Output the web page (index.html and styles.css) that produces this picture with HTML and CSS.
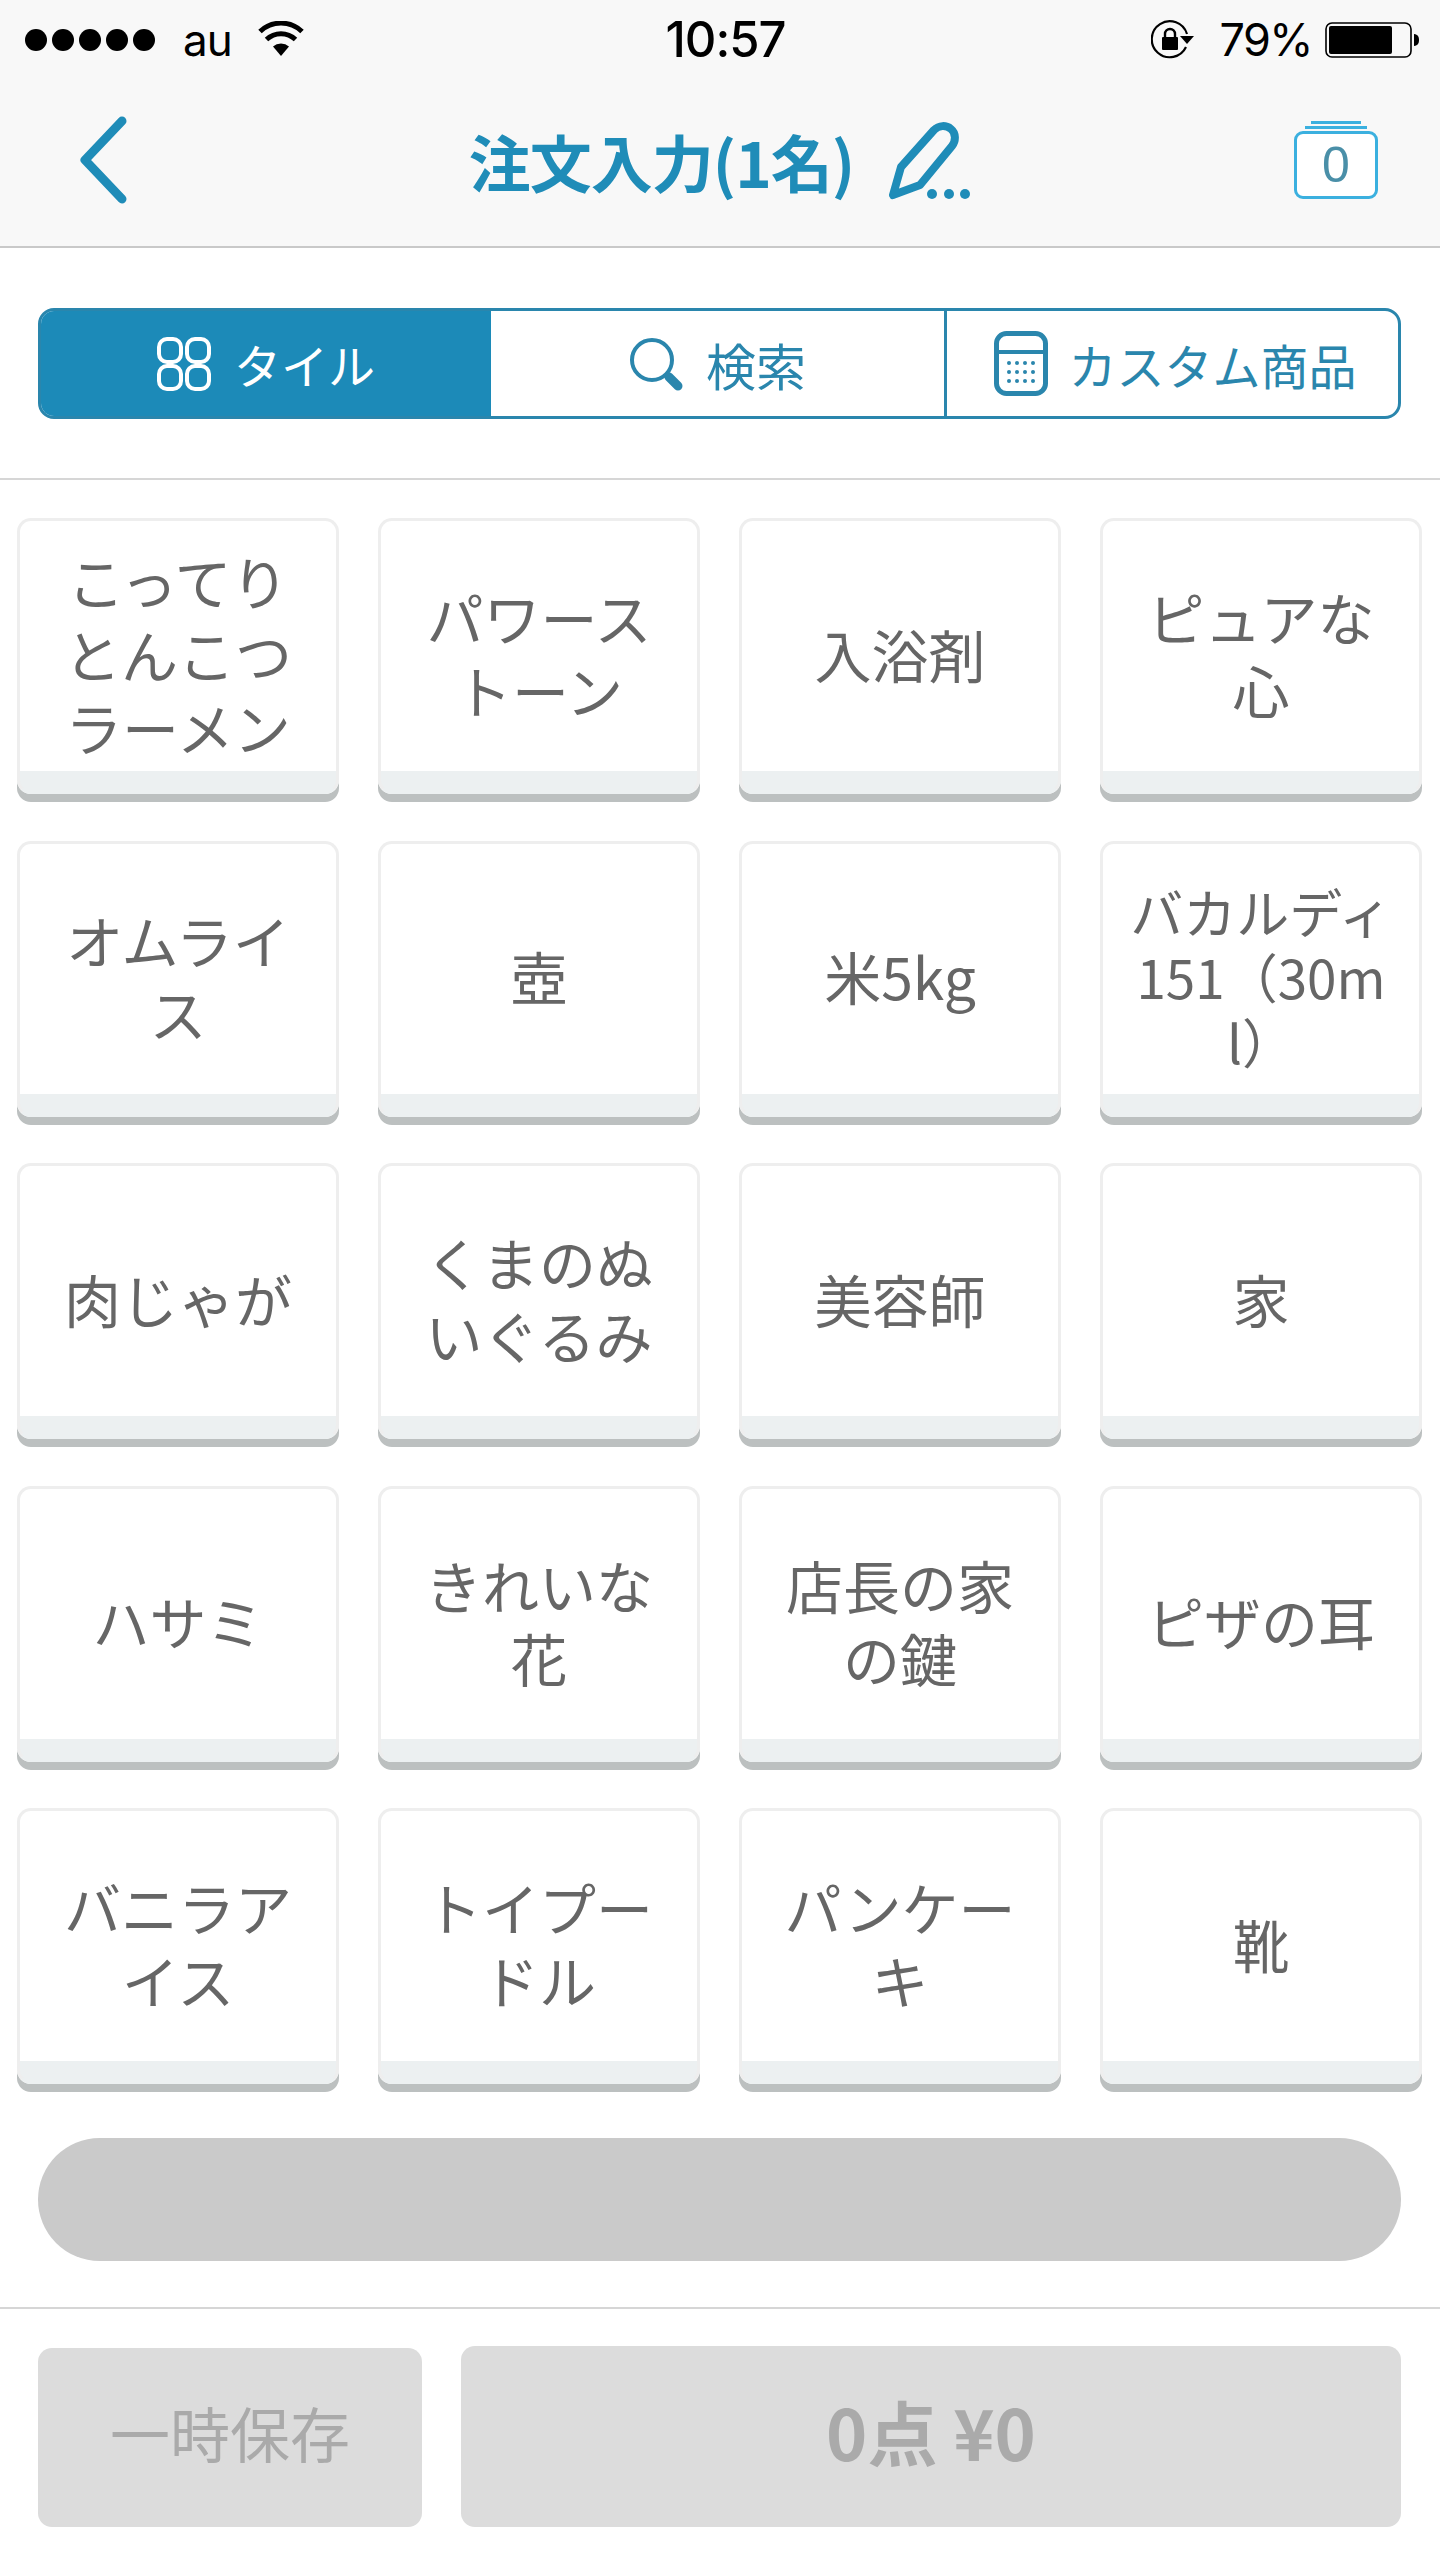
FILE: index.html
```html
<!DOCTYPE html>
<html lang="ja">
<head>
<meta charset="utf-8">
<title>注文入力</title>
<link rel="stylesheet" href="styles.css">
</head>
<body>
<div class="app">
  <header class="top">
    <div class="status">
      <div class="status-left">
        <span class="dots"><i></i><i></i><i></i><i></i><i></i></span>
        <span class="carrier">au</span>
        <svg class="wifi" viewBox="0 0 46 35"><path d="M23 35 15 25.5a12 12 0 0 1 16 0Z" fill="#000"/><path d="M8.5 18.5a21 21 0 0 1 29 0" fill="none" stroke="#000" stroke-width="5"/><path d="M2 10.5a30.5 30.5 0 0 1 42 0" fill="none" stroke="#000" stroke-width="5"/></svg>
      </div>
      <div class="time">10:57</div>
      <div class="status-right">
        <svg class="lock" viewBox="0 0 44 40"><path d="M35 27A18 18 0 1 1 36 14" fill="none" stroke="#000" stroke-width="2.2"/><path d="M29 16h14l-7 8Z" fill="#000"/><rect x="11" y="17" width="16" height="13" rx="1" fill="#000"/><path d="M14 18v-4a5 5 0 0 1 10 0v4" fill="none" stroke="#000" stroke-width="2.4"/></svg>
        <span class="battery-pct">79%</span>
        <svg class="battery" viewBox="0 0 95 36"><rect x="1" y="1" width="85" height="34" rx="6" fill="none" stroke="#000" stroke-width="1.6"/><rect x="4" y="4" width="63" height="28" rx="2" fill="#000"/><path d="M89 12c4 .5 5 3 5 6s-1 5.500-5 6Z" fill="#000"/></svg>
      </div>
    </div>
    <nav class="nav">
      <div class="nav-left">
        <svg class="back" viewBox="0 0 50 88"><path d="M43 5 6 44l37 39" fill="none" stroke="#1f8cb8" stroke-width="9" stroke-linecap="round" stroke-linejoin="round"/></svg>
      </div>
      <div class="title">
        <span class="title-text">注文入力(1名)</span>
        <svg class="pencil" viewBox="0 0 84 78"><path d="M6 73 14 45 47 8c5-5 12-5 17-1 5 4 5 12 1 17L33 63Z" fill="none" stroke="#1f8cb8" stroke-width="8" stroke-linejoin="round"/><circle cx="45" cy="72" r="5" fill="#1f8cb8"/><circle cx="62" cy="72" r="5" fill="#1f8cb8"/><circle cx="78" cy="72" r="5" fill="#1f8cb8"/></svg>
      </div>
      <div class="nav-right">
        <div class="stack">
          <span class="stack-layer stack-layer-top"></span>
          <span class="stack-layer stack-layer-mid"></span>
          <span class="stack-box">0</span>
        </div>
      </div>
    </nav>
  </header>

  <section class="tabs-wrap">
    <div class="tabs">
      <div class="tab tab-active">
        <svg class="tab-icon" viewBox="0 0 54 54"><g fill="none" stroke="#fff" stroke-width="4"><rect x="2" y="2" width="22" height="23" rx="8"/><rect x="30" y="2" width="22" height="23" rx="8"/><rect x="2" y="29" width="22" height="23" rx="8"/><rect x="30" y="29" width="22" height="23" rx="8"/></g></svg>
        <span>タイル</span>
      </div>
      <div class="tab tab-mid">
        <svg class="tab-icon" viewBox="0 0 54 54"><circle cx="23" cy="23" r="20" fill="none" stroke="#2a86ad" stroke-width="4"/><path d="M40 40 49 49" stroke="#2a86ad" stroke-width="9" stroke-linecap="round"/></svg>
        <span>検索</span>
      </div>
      <div class="tab tab-custom">
        <svg class="tab-icon tab-icon-calc" viewBox="0 0 54 65"><rect x="2.500" y="2.500" width="49" height="60" rx="10" fill="none" stroke="#2a86ad" stroke-width="5"/><path d="M3 21h48" stroke="#2a86ad" stroke-width="4"/><g fill="#2a86ad"><circle cx="15" cy="32" r="2"/><circle cx="23" cy="32" r="2"/><circle cx="31" cy="32" r="2"/><circle cx="39" cy="32" r="2"/><circle cx="15" cy="41" r="2"/><circle cx="23" cy="41" r="2"/><circle cx="31" cy="41" r="2"/><circle cx="39" cy="41" r="2"/><circle cx="15" cy="50" r="2"/><circle cx="23" cy="50" r="2"/><circle cx="31" cy="50" r="2"/><circle cx="39" cy="50" r="2"/></g></svg>
        <span>カスタム商品</span>
      </div>
    </div>
  </section>

  <main class="grid">
    <div class="tile"><span>こってりとんこつラーメン</span></div>
    <div class="tile"><span>パワーストーン</span></div>
    <div class="tile"><span>入浴剤</span></div>
    <div class="tile"><span>ピュアな心</span></div>
    <div class="tile"><span>オムライス</span></div>
    <div class="tile"><span>壺</span></div>
    <div class="tile"><span>米5kg</span></div>
    <div class="tile tile-small"><span>バカルディ151（30ml）</span></div>
    <div class="tile"><span>肉じゃが</span></div>
    <div class="tile"><span>くまのぬいぐるみ</span></div>
    <div class="tile"><span>美容師</span></div>
    <div class="tile"><span>家</span></div>
    <div class="tile"><span>ハサミ</span></div>
    <div class="tile"><span>きれいな花</span></div>
    <div class="tile"><span>店長の家の鍵</span></div>
    <div class="tile"><span>ピザの耳</span></div>
    <div class="tile"><span>バニラアイス</span></div>
    <div class="tile"><span>トイプードル</span></div>
    <div class="tile"><span>パンケーキ</span></div>
    <div class="tile"><span>靴</span></div>
  </main>

  <div class="pill-wrap"><div class="pill"></div></div>

  <footer class="footer">
    <div class="btn btn-save"><span class="btn-label">一時保存</span></div>
    <div class="btn btn-total"><span class="btn-label">0点 ¥0</span></div>
  </footer>
</div>
</body>
</html>
```
FILE: styles.css
```css
* { box-sizing: border-box; }
html, body { margin: 0; padding: 0; background: #fff; }
body { font-family: "Noto Sans CJK JP", "Liberation Sans", sans-serif; }
.app { width: 1440px; height: 2561px; overflow: hidden; }

.top { height: 248px; background: #f8f8f8; border-bottom: 2px solid #c9c9c9; }
.status { height: 80px; display: grid; grid-template-columns: 1fr auto 1fr; align-items: center; padding: 0 20px 0 25px; color: #000; font-family: Inter, "Liberation Sans", sans-serif; }
.status-left { display: flex; align-items: center; }
.dots { display: flex; gap: 5px; }
.dots i { width: 22px; height: 22px; border-radius: 50%; background: #000; display: block; }
.carrier { font-size: 44px; line-height: 80px; margin-left: 28px; letter-spacing: -1px; }
.wifi { width: 46px; height: 35px; margin-left: 26px; margin-top: -4px; }
.time { font-size: 49px; line-height: 80px; font-weight: 500; letter-spacing: -1px; margin-left: 6px; }
.status-right { display: flex; align-items: center; justify-content: flex-end; }
.lock { width: 44px; height: 40px; }
.battery-pct { font-size: 45px; line-height: 80px; margin-left: 24px; letter-spacing: -1.500px; }
.battery { width: 95px; height: 36px; margin-left: 13px; }

.nav { height: 166px; display: grid; grid-template-columns: 1fr auto 1fr; align-items: center; }
.nav-left { padding-left: 79px; display: flex; }
.back { width: 50px; height: 88px; margin-top: -6px; }
.title { display: flex; align-items: center; color: #1f8cb8; font-size: 62px; font-weight: 700; line-height: 1; }
.title-text { white-space: nowrap; letter-spacing: -1px; margin-top: -4px; }
.pencil { width: 84px; height: 78px; margin-left: 33px; margin-top: -4px; }
.nav-right { display: flex; justify-content: flex-end; padding-right: 62px; }
.stack { width: 84px; height: 78px; display: flex; flex-direction: column; align-items: center; margin-top: -6px; }
.stack-layer { display: block; height: 3px; background: #3bb0df; }
.stack-layer-top { width: 50px; margin-bottom: 2px; }
.stack-layer-mid { width: 62px; margin-bottom: 2px; }
.stack-box { width: 84px; flex: 1; border: 3px solid #3bb0df; border-radius: 9px; background: #fff; color: #4a8fa8; font-family: "Liberation Sans", sans-serif; font-size: 50px; line-height: 1; display: flex; align-items: center; justify-content: center; }

.tabs-wrap { padding: 60px 39px 59px 38px; border-bottom: 2px solid #d6d6d6; height: 232px; }
.tabs { display: grid; grid-template-columns: 450px 456px 457px; height: 111px; border: 3px solid #2a86ad; border-radius: 16px; overflow: hidden; background: #fff; }
.tab { display: flex; align-items: center; justify-content: center; gap: 23px; color: #2a86ad; font-size: 48px; line-height: 1; }
.tab-active { background: #1c8ab8; color: #fff; font-size: 47px; }
.tab-mid { border-right: 3px solid #2a86ad; font-size: 50px; }
.tab-custom { gap: 20px; }
.tab-icon { width: 54px; height: 54px; flex: none; }
.tab-icon-calc { height: 65px; }

.grid { display: grid; grid-template-columns: repeat(4, 322px); column-gap: 39px; row-gap: 46.5px; padding: 38px 17px 0; grid-auto-rows: 276px; }
.tile { display: flex; align-items: center; justify-content: center; padding: 0 26px; border: 3px solid #eeeeee; border-bottom-color: #ecf0f1; border-radius: 14px; background: linear-gradient(#fff calc(100% - 20px), #ecf0f1 0); box-shadow: 0 8px 0 #bcc0c0; color: #666; font-size: 57px; line-height: 73px; text-align: center; word-break: break-all; }
.tile span { display: block; margin-top: -6px; }
.tile-small { padding: 0 19px; font-size: 53px; line-height: 65px; }
.tile-small span { margin-top: -4px; }

.pill-wrap { padding: 54px 39px 46px 38px; border-bottom: 2px solid #d6d6d6; }
.pill { height: 123px; border-radius: 62px; background: #cacaca; }

.footer { display: flex; align-items: flex-end; gap: 39px; padding: 0 39px 0 38px; height: 218px; }
.btn { display: flex; align-items: center; justify-content: center; background: #dcdcdc; border-radius: 14px; color: #aaa; font-size: 60px; line-height: 1; }
.btn-label { display: block; margin-top: -12px; }
.btn-save { width: 384px; height: 179px; }
.btn-total { flex: 1; height: 181px; font-size: 70px; font-weight: 700; }
```
